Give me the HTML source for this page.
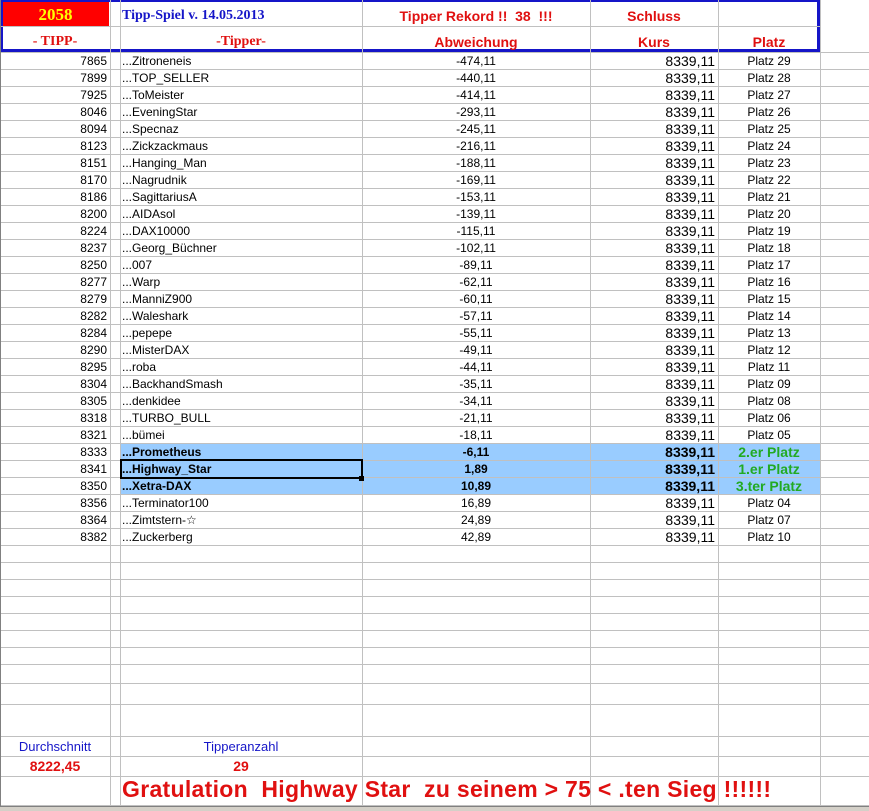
<!DOCTYPE html>
<html><head><meta charset="utf-8"><style>
body{margin:0;width:869px;height:810px;overflow:hidden;background:#fff;font-family:"Liberation Sans",Arial,sans-serif;position:relative}
.h{position:absolute;left:0;width:869px;height:1px;background:#c0c0c0}
.v{position:absolute;top:0;width:1px;height:806px;background:#c0c0c0}
.r{position:absolute;left:0;width:869px;height:17px;font-size:12px;line-height:18px;color:#000}
.r span{position:absolute;top:0;white-space:nowrap}
.a{right:762px;text-align:right}
.c{left:122px}
.d{left:362px;width:228px;text-align:center}
.e{right:154px;font-size:14px}
.f{left:718px;width:102px;text-align:center}
.hl span{font-weight:bold}
.hl .f{color:#22aa22;font-size:14px}
.t{position:absolute;white-space:nowrap}
</style></head><body>
<div style="position:absolute;left:2px;top:2px;width:107px;height:24px;background:#ff0000"></div>
<div style="position:absolute;left:0;top:0;width:814px;height:47px;border:3px solid #1515c8;border-top-width:2px"></div>
<div class="h" style="top:26px;width:820px"></div>
<div class="t" style="left:2px;width:107px;top:5px;text-align:center;font:bold 17px 'Liberation Serif',serif;color:#ffff00">2058</div>
<div class="t" style="left:122px;top:8px;font:bold 14px 'Liberation Serif',serif;color:#1515c8">Tipp-Spiel v. 14.05.2013</div>
<div class="t" style="left:362px;width:228px;top:8px;text-align:center;font:bold 14px 'Liberation Sans',sans-serif;color:#e01010">Tipper Rekord !!&nbsp; 38 &nbsp;!!!</div>
<div class="t" style="left:590px;width:128px;top:8px;text-align:center;font:bold 14px 'Liberation Sans',sans-serif;color:#e01010">Schluss</div>
<div class="t" style="left:0;width:110px;top:34px;text-align:center;font:bold 14px 'Liberation Serif',serif;color:#e01010">- TIPP-</div>
<div class="t" style="left:120px;width:242px;top:34px;text-align:center;font:bold 14px 'Liberation Serif',serif;color:#e01010">-Tipper-</div>
<div class="t" style="left:362px;width:228px;top:34px;text-align:center;font:bold 14px 'Liberation Sans',sans-serif;color:#e01010">Abweichung</div>
<div class="t" style="left:590px;width:128px;top:34px;text-align:center;font:bold 14px 'Liberation Sans',sans-serif;color:#e01010">Kurs</div>
<div class="t" style="left:718px;width:102px;top:34px;text-align:center;font:bold 14px 'Liberation Sans',sans-serif;color:#e01010">Platz</div>

<div class="r" style="top:52px"><span class="a">7865</span><span class="c">...Zitroneneis</span><span class="d">-474,11</span><span class="e">8339,11</span><span class="f">Platz 29</span></div>
<div class="r" style="top:69px"><span class="a">7899</span><span class="c">...TOP_SELLER</span><span class="d">-440,11</span><span class="e">8339,11</span><span class="f">Platz 28</span></div>
<div class="r" style="top:86px"><span class="a">7925</span><span class="c">...ToMeister</span><span class="d">-414,11</span><span class="e">8339,11</span><span class="f">Platz 27</span></div>
<div class="r" style="top:103px"><span class="a">8046</span><span class="c">...EveningStar</span><span class="d">-293,11</span><span class="e">8339,11</span><span class="f">Platz 26</span></div>
<div class="r" style="top:120px"><span class="a">8094</span><span class="c">...Specnaz</span><span class="d">-245,11</span><span class="e">8339,11</span><span class="f">Platz 25</span></div>
<div class="r" style="top:137px"><span class="a">8123</span><span class="c">...Zickzackmaus</span><span class="d">-216,11</span><span class="e">8339,11</span><span class="f">Platz 24</span></div>
<div class="r" style="top:154px"><span class="a">8151</span><span class="c">...Hanging_Man</span><span class="d">-188,11</span><span class="e">8339,11</span><span class="f">Platz 23</span></div>
<div class="r" style="top:171px"><span class="a">8170</span><span class="c">...Nagrudnik</span><span class="d">-169,11</span><span class="e">8339,11</span><span class="f">Platz 22</span></div>
<div class="r" style="top:188px"><span class="a">8186</span><span class="c">...SagittariusA</span><span class="d">-153,11</span><span class="e">8339,11</span><span class="f">Platz 21</span></div>
<div class="r" style="top:205px"><span class="a">8200</span><span class="c">...AIDAsol</span><span class="d">-139,11</span><span class="e">8339,11</span><span class="f">Platz 20</span></div>
<div class="r" style="top:222px"><span class="a">8224</span><span class="c">...DAX10000</span><span class="d">-115,11</span><span class="e">8339,11</span><span class="f">Platz 19</span></div>
<div class="r" style="top:239px"><span class="a">8237</span><span class="c">...Georg_Büchner</span><span class="d">-102,11</span><span class="e">8339,11</span><span class="f">Platz 18</span></div>
<div class="r" style="top:256px"><span class="a">8250</span><span class="c">...007</span><span class="d">-89,11</span><span class="e">8339,11</span><span class="f">Platz 17</span></div>
<div class="r" style="top:273px"><span class="a">8277</span><span class="c">...Warp</span><span class="d">-62,11</span><span class="e">8339,11</span><span class="f">Platz 16</span></div>
<div class="r" style="top:290px"><span class="a">8279</span><span class="c">...ManniZ900</span><span class="d">-60,11</span><span class="e">8339,11</span><span class="f">Platz 15</span></div>
<div class="r" style="top:307px"><span class="a">8282</span><span class="c">...Waleshark</span><span class="d">-57,11</span><span class="e">8339,11</span><span class="f">Platz 14</span></div>
<div class="r" style="top:324px"><span class="a">8284</span><span class="c">...pepepe</span><span class="d">-55,11</span><span class="e">8339,11</span><span class="f">Platz 13</span></div>
<div class="r" style="top:341px"><span class="a">8290</span><span class="c">...MisterDAX</span><span class="d">-49,11</span><span class="e">8339,11</span><span class="f">Platz 12</span></div>
<div class="r" style="top:358px"><span class="a">8295</span><span class="c">...roba</span><span class="d">-44,11</span><span class="e">8339,11</span><span class="f">Platz 11</span></div>
<div class="r" style="top:375px"><span class="a">8304</span><span class="c">...BackhandSmash</span><span class="d">-35,11</span><span class="e">8339,11</span><span class="f">Platz 09</span></div>
<div class="r" style="top:392px"><span class="a">8305</span><span class="c">...denkidee</span><span class="d">-34,11</span><span class="e">8339,11</span><span class="f">Platz 08</span></div>
<div class="r" style="top:409px"><span class="a">8318</span><span class="c">...TURBO_BULL</span><span class="d">-21,11</span><span class="e">8339,11</span><span class="f">Platz 06</span></div>
<div class="r" style="top:426px"><span class="a">8321</span><span class="c">...bümei</span><span class="d">-18,11</span><span class="e">8339,11</span><span class="f">Platz 05</span></div>
<div style="position:absolute;left:120px;top:443px;width:700px;height:51px;background:#99ccff"></div>
<div class="r hl" style="top:443px"><span class="a" style="font-weight:normal">8333</span><span class="c">...Prometheus</span><span class="d">-6,11</span><span class="e">8339,11</span><span class="f">2.er Platz</span></div>
<div class="r hl" style="top:460px"><span class="a" style="font-weight:normal">8341</span><span class="c">...Highway_Star</span><span class="d">1,89</span><span class="e">8339,11</span><span class="f">1.er Platz</span></div>
<div class="r hl" style="top:477px"><span class="a" style="font-weight:normal">8350</span><span class="c">...Xetra-DAX</span><span class="d">10,89</span><span class="e">8339,11</span><span class="f">3.ter Platz</span></div>
<div class="r" style="top:494px"><span class="a">8356</span><span class="c">...Terminator100</span><span class="d">16,89</span><span class="e">8339,11</span><span class="f">Platz 04</span></div>
<div class="r" style="top:511px"><span class="a">8364</span><span class="c">...Zimtstern-☆</span><span class="d">24,89</span><span class="e">8339,11</span><span class="f">Platz 07</span></div>
<div class="r" style="top:528px"><span class="a">8382</span><span class="c">...Zuckerberg</span><span class="d">42,89</span><span class="e">8339,11</span><span class="f">Platz 10</span></div>

<div class="h" style="top:52px"></div><div class="h" style="top:69px"></div><div class="h" style="top:86px"></div><div class="h" style="top:103px"></div><div class="h" style="top:120px"></div><div class="h" style="top:137px"></div><div class="h" style="top:154px"></div><div class="h" style="top:171px"></div><div class="h" style="top:188px"></div><div class="h" style="top:205px"></div><div class="h" style="top:222px"></div><div class="h" style="top:239px"></div><div class="h" style="top:256px"></div><div class="h" style="top:273px"></div><div class="h" style="top:290px"></div><div class="h" style="top:307px"></div><div class="h" style="top:324px"></div><div class="h" style="top:341px"></div><div class="h" style="top:358px"></div><div class="h" style="top:375px"></div><div class="h" style="top:392px"></div><div class="h" style="top:409px"></div><div class="h" style="top:426px"></div><div class="h" style="top:443px"></div><div class="h" style="top:460px"></div><div class="h" style="top:477px"></div><div class="h" style="top:494px"></div><div class="h" style="top:511px"></div><div class="h" style="top:528px"></div><div class="h" style="top:545px"></div><div class="h" style="top:562px"></div><div class="h" style="top:579px"></div><div class="h" style="top:596px"></div><div class="h" style="top:613px"></div><div class="h" style="top:630px"></div><div class="h" style="top:647px"></div><div class="h" style="top:664px"></div><div class="h" style="top:683px"></div><div class="h" style="top:704px"></div><div class="h" style="top:736px"></div><div class="h" style="top:756px"></div><div class="h" style="top:776px"></div><div class="h" style="top:805px"></div>
<div class="v" style="left:0;background:#808080"></div>
<div class="v" style="left:110px"></div><div class="v" style="left:120px"></div><div class="v" style="left:362px"></div><div class="v" style="left:590px"></div><div class="v" style="left:718px"></div><div class="v" style="left:820px"></div>

<div style="position:absolute;left:120px;top:459px;width:239px;height:16px;border:2px solid #000"></div>
<div style="position:absolute;left:359px;top:476px;width:5px;height:5px;background:#000"></div>

<div class="t" style="left:0;width:110px;top:739px;text-align:center;font-size:13px;color:#1515c8">Durchschnitt</div>
<div class="t" style="left:120px;width:242px;top:739px;text-align:center;font-size:13px;color:#1515c8">Tipperanzahl</div>
<div class="t" style="left:0;width:110px;top:758px;text-align:center;font:bold 14px 'Liberation Sans',sans-serif;color:#e01010">8222,45</div>
<div class="t" style="left:120px;width:242px;top:758px;text-align:center;font:bold 14px 'Liberation Sans',sans-serif;color:#e01010">29</div>
<div class="t" style="left:122px;top:776px;font:bold 23px 'Liberation Sans',sans-serif;color:#e01010;letter-spacing:0.3px">Gratulation&nbsp; Highway Star&nbsp; zu seinem &gt; 75 &lt; .ten Sieg !!!!!!</div>
<div style="position:absolute;left:0;top:806px;width:869px;height:4px;background:#d4d0c8;border-top:1px solid #808080"></div>
</body></html>
